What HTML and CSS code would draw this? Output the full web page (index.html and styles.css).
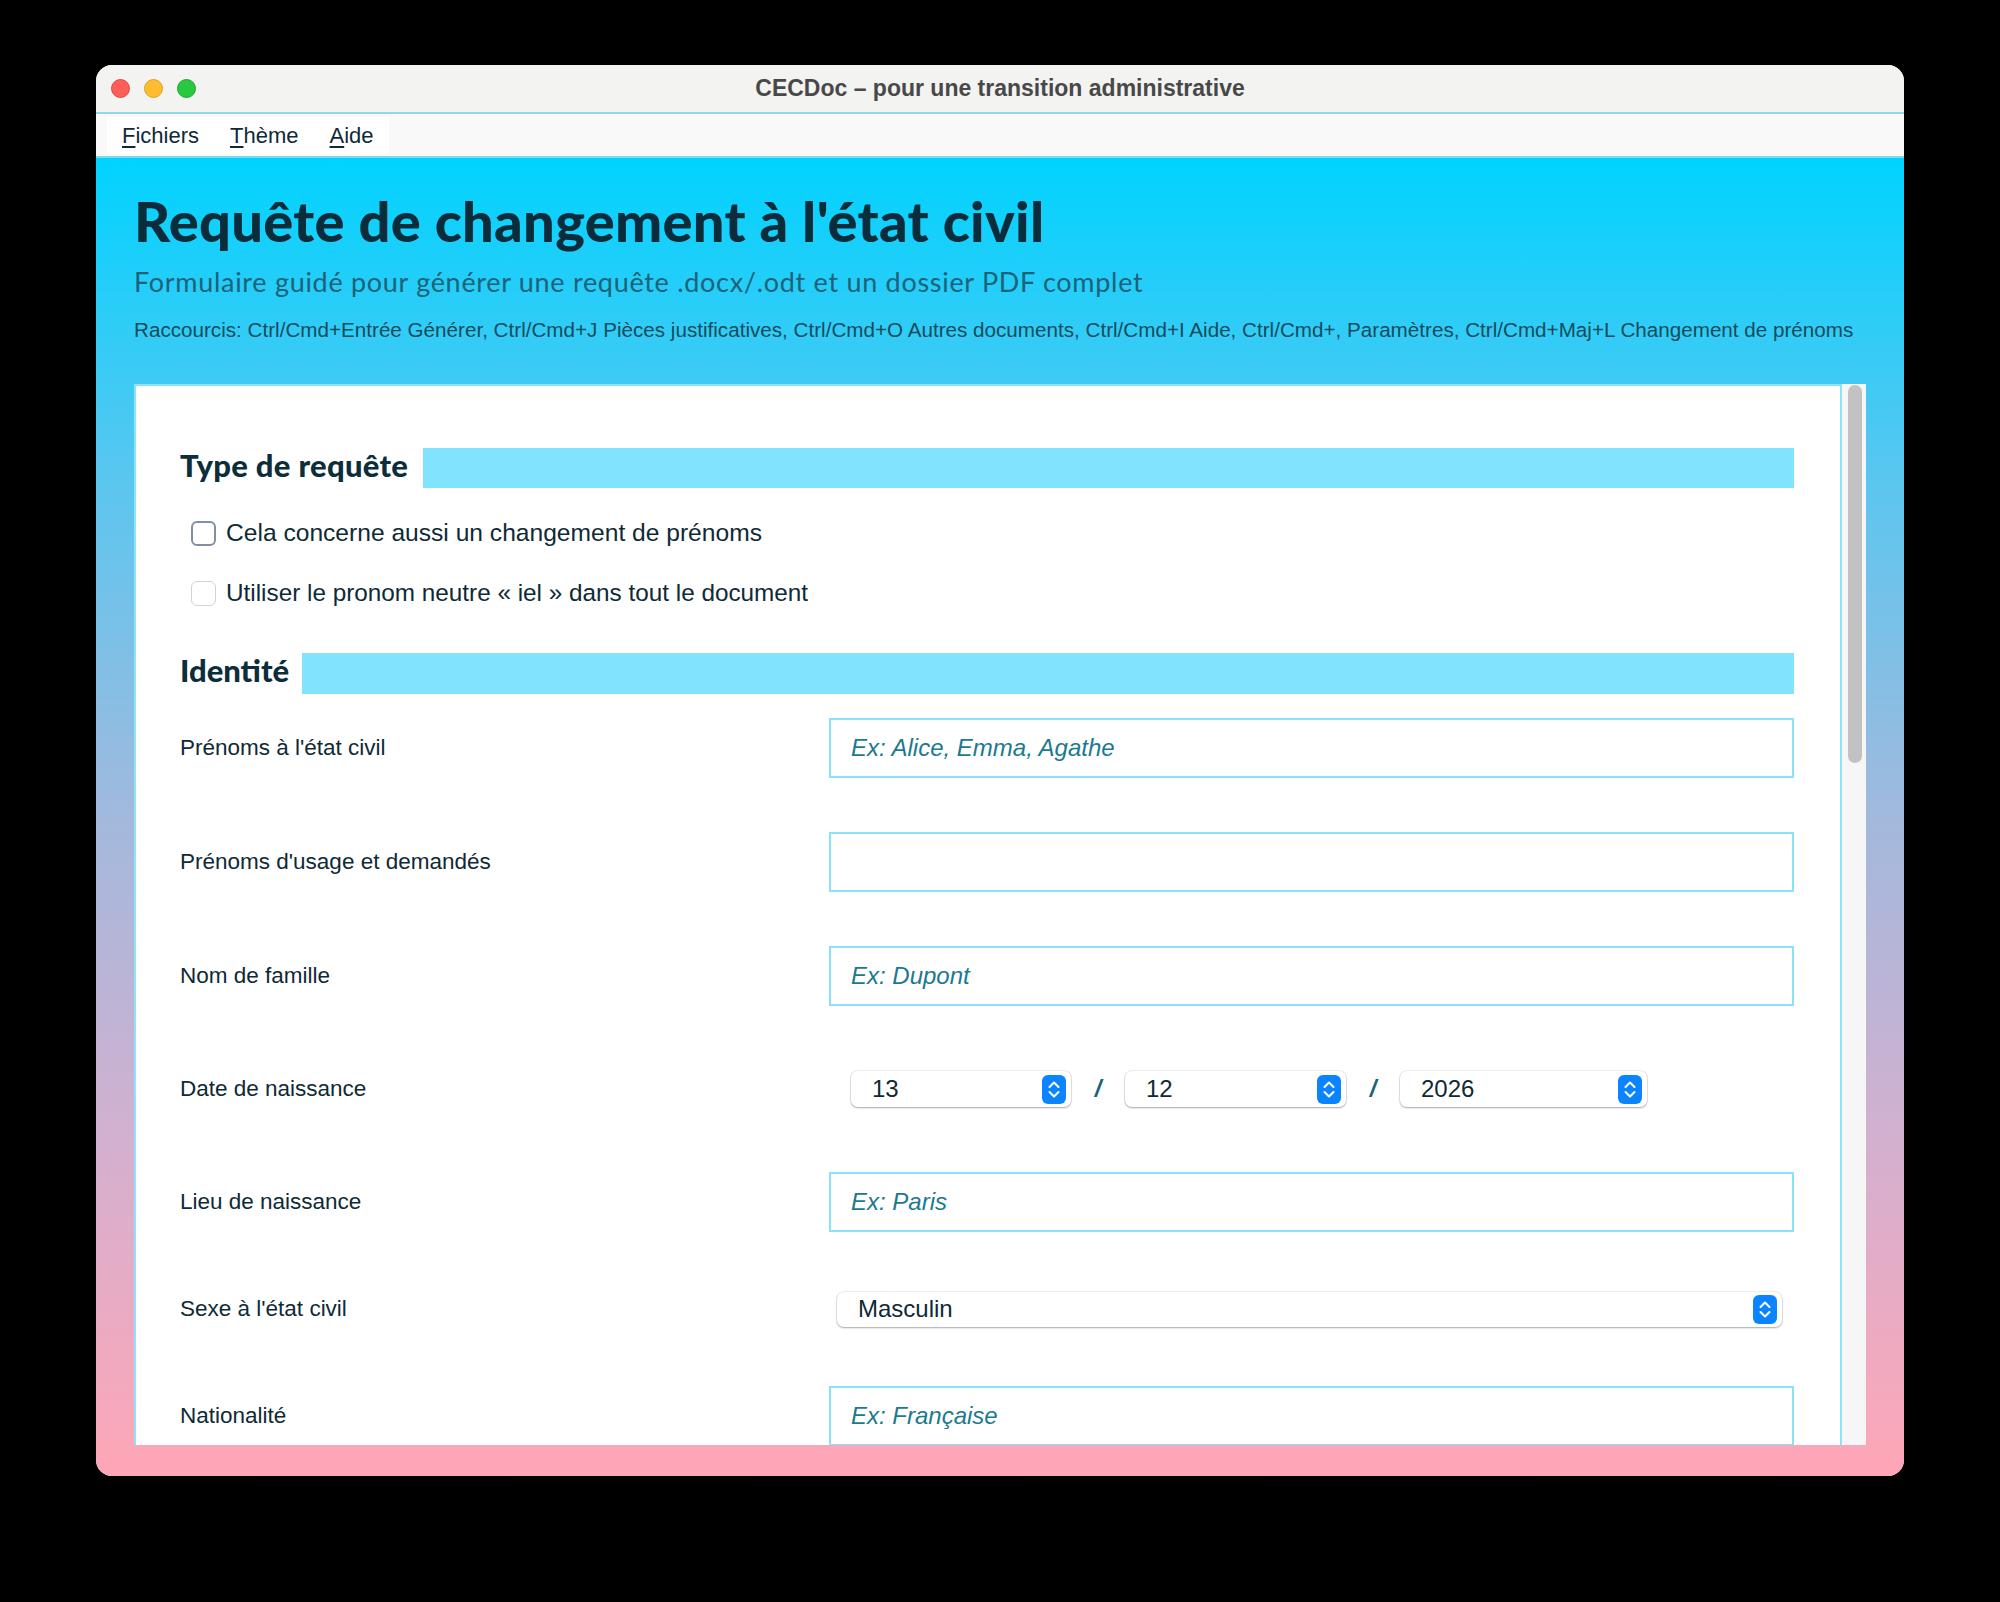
FILE: index.html
```html
<!DOCTYPE html>
<html lang="fr">
<head>
<meta charset="utf-8">
<title>CECDoc</title>
<link rel="stylesheet" href="styles.css">
</head>
<body>
<div class="window">
  <div class="titlebar">
    <div class="lights">
      <span class="light red"></span>
      <span class="light yellow"></span>
      <span class="light green"></span>
    </div>
    <div class="wintitle">CECDoc – pour une transition administrative</div>
    <div></div>
  </div>
  <div class="menubar">
    <div class="menu">
      <span class="menu-item"><u>F</u>ichiers</span>
      <span class="menu-item"><u>T</u>hème</span>
      <span class="menu-item"><u>A</u>ide</span>
    </div>
  </div>
  <div class="content">
    <h1 class="page-title">Requête de changement à l'état civil</h1>
    <p class="subtitle">Formulaire guidé pour générer une requête .docx/.odt et un dossier PDF complet</p>
    <p class="shortcuts">Raccourcis: Ctrl/Cmd+Entrée Générer, Ctrl/Cmd+J Pièces justificatives, Ctrl/Cmd+O Autres documents, Ctrl/Cmd+I Aide, Ctrl/Cmd+, Paramètres, Ctrl/Cmd+Maj+L Changement de prénoms</p>
    <div class="card-wrap">
      <div class="panel">
        <div class="section-head">
          <h2 class="section-title">Type de requête</h2>
          <div class="section-bar"></div>
        </div>
        <div class="checks">
          <label class="check"><span class="box focused"></span>Cela concerne aussi un changement de prénoms</label>
          <label class="check check-2"><span class="box"></span>Utiliser le pronom neutre « iel » dans tout le document</label>
        </div>
        <div class="section-head identity">
          <h2 class="section-title">Identité</h2>
          <div class="section-bar"></div>
        </div>
        <div class="form">
          <div class="label">Prénoms à l'état civil</div>
          <input class="field" type="text" placeholder="Ex: Alice, Emma, Agathe">

          <div class="label">Prénoms d'usage et demandés</div>
          <input class="field" type="text">

          <div class="label">Nom de famille</div>
          <input class="field" type="text" placeholder="Ex: Dupont">

          <div class="label">Date de naissance</div>
          <div class="date">
            <div class="spin w-day"><span>13</span>
              <svg class="stepper" viewBox="0 0 24 29" width="24" height="29"><rect width="24" height="29" rx="6" fill="#0a84ff"/><path d="M7.5 12 L12 7.5 L16.5 12 M7.5 17 L12 21.5 L16.5 17" fill="none" stroke="#fff" stroke-width="2" stroke-linecap="round" stroke-linejoin="round"/></svg>
            </div>
            <span class="slash">/</span>
            <div class="spin w-month"><span>12</span>
              <svg class="stepper" viewBox="0 0 24 29" width="24" height="29"><rect width="24" height="29" rx="6" fill="#0a84ff"/><path d="M7.5 12 L12 7.5 L16.5 12 M7.5 17 L12 21.5 L16.5 17" fill="none" stroke="#fff" stroke-width="2" stroke-linecap="round" stroke-linejoin="round"/></svg>
            </div>
            <span class="slash">/</span>
            <div class="spin w-year"><span>2026</span>
              <svg class="stepper" viewBox="0 0 24 29" width="24" height="29"><rect width="24" height="29" rx="6" fill="#0a84ff"/><path d="M7.5 12 L12 7.5 L16.5 12 M7.5 17 L12 21.5 L16.5 17" fill="none" stroke="#fff" stroke-width="2" stroke-linecap="round" stroke-linejoin="round"/></svg>
            </div>
          </div>

          <div class="label">Lieu de naissance</div>
          <input class="field" type="text" placeholder="Ex: Paris">

          <div class="label">Sexe à l'état civil</div>
          <div class="select-cell">
            <div class="spin select"><span>Masculin</span>
              <svg class="stepper" viewBox="0 0 24 29" width="24" height="29"><rect width="24" height="29" rx="6" fill="#0a84ff"/><path d="M7.5 12 L12 7.5 L16.5 12 M7.5 17 L12 21.5 L16.5 17" fill="none" stroke="#fff" stroke-width="2" stroke-linecap="round" stroke-linejoin="round"/></svg>
            </div>
          </div>

          <div class="label">Nationalité</div>
          <input class="field" type="text" placeholder="Ex: Française">
        </div>
      </div>
      <div class="scrollbar"><div class="thumb"></div></div>
    </div>
  </div>
</div>
</body>
</html>
```

FILE: styles.css
```css
html, body {
  margin: 0;
  padding: 0;
  background: #000;
}
body {
  font-family: "Liberation Sans", Arial, sans-serif;
  color: #0f2a36;
  height: 1602px;
  overflow: hidden;
}
.window {
  margin: 65px 0 0 96px;
  width: 1808px;
  height: 1411px;
  border-radius: 16px;
  overflow: hidden;
  display: flex;
  flex-direction: column;
  background: #f2f2f0;
}
.titlebar {
  height: 47px;
  flex: none;
  background: #f3f3f1;
  display: grid;
  grid-template-columns: 1fr auto 1fr;
  align-items: center;
}
.lights {
  display: flex;
  gap: 14px;
  padding-left: 15px;
}
.light {
  width: 19px;
  height: 19px;
  border-radius: 50%;
  box-sizing: border-box;
}
.red { background: #ff5f57; border: 1px solid #e2463f; }
.yellow { background: #febc2e; border: 1px solid #dfa023; }
.green { background: #28c840; border: 1px solid #1aab29; }
.wintitle {
  font-weight: 700;
  font-size: 23px;
  color: #484848;
}
.menubar {
  flex: none;
  height: 46px;
  box-sizing: border-box;
  border-top: 2px solid #8fd9ee;
  border-bottom: 2px solid #7ed8ef;
  background: #f9f9f9;
  padding: 3px 0 0 11px;
}
.menu {
  display: flex;
  align-items: center;
  width: 282px;
  height: 37px;
  box-sizing: border-box;
  background: #fff;
  padding-left: 15px;
  gap: 31px;
  font-size: 22px;
  color: #0f2a36;
}
.menu-item u {
  text-decoration-thickness: 2px;
  text-underline-offset: 3px;
}
.content {
  flex: 1;
  min-height: 0;
  display: flex;
  flex-direction: column;
  padding: 31px 38px 31px 38px;
  background: linear-gradient(180deg, #00d3ff 0%, #5cc6ef 25%, #a2b9dd 50%, #d4b0cf 75%, #ffa6b7 100%);
}
.page-title {
  margin: 0;
  font-family: Lato, "Liberation Sans", sans-serif;
  font-weight: 900;
  font-size: 56px;
  line-height: 64px;
  letter-spacing: 0.3px;
  color: #0b2c3a;
}
.subtitle {
  margin: 12px 0 0;
  font-family: Lato, "Liberation Sans", sans-serif;
  font-weight: 400;
  font-size: 27px;
  line-height: 34px;
  letter-spacing: 0.7px;
  color: #1d6278;
}
.shortcuts {
  margin: 17px 0 0;
  font-size: 20.65px;
  line-height: 28px;
  white-space: nowrap;
  color: #164c5d;
}
.card-wrap {
  flex: 1;
  min-height: 0;
  display: flex;
  margin-top: 40px;
}
.panel {
  flex: 1;
  min-width: 0;
  background: #fff;
  border: 2px solid #8fe3f8;
  border-bottom: none;
  overflow: hidden;
  padding: 62px 46px 0 44px;
}
.scrollbar {
  width: 24px;
  flex: none;
  background: #f6f6f6;
  padding: 1px 4px 0 6px;
  box-sizing: border-box;
}
.thumb {
  height: 378px;
  border-radius: 8px;
  background: #c2c2c2;
}
.section-head {
  display: flex;
  align-items: center;
  height: 40px;
}
.section-title {
  margin: 0;
  padding-bottom: 6px;
  font-family: Lato, "Liberation Sans", sans-serif;
  font-weight: 900;
  font-size: 31px;
  line-height: 36px;
  letter-spacing: 0.3px;
  color: #0c2e3b;
  white-space: nowrap;
}
.section-bar {
  flex: 1;
  height: 40px;
  margin-left: 15px;
  background: #82e3ff;
}
.identity {
  margin-top: 40px;
  height: 41px;
}
.identity .section-title { letter-spacing: 0; padding-bottom: 8px; }
.identity .section-bar { height: 41px; margin-left: 13px; }
.checks {
  margin-top: 25px;
  display: flex;
  flex-direction: column;
  gap: 20px;
}
.check {
  height: 40px;
  display: flex;
  align-items: center;
  gap: 10px;
  padding-left: 11px;
  font-size: 24.6px;
  color: #0f2a36;
}
.check-2 { font-size: 24.3px; }
.box {
  width: 25px;
  height: 25px;
  box-sizing: border-box;
  border-radius: 6px;
  border: 1.5px solid #d3d3d3;
  background: #fff;
}
.box.focused {
  border: 2.5px solid #7e90a2;
}
.form {
  margin-top: 24px;
  display: grid;
  grid-template-columns: 649px 1fr;
  grid-template-rows: 60px 60px 60px 58px 60px 46px 60px;
  row-gap: 54px;
}
.label {
  align-self: center;
  font-size: 22.5px;
  color: #0f2a36;
}
.field {
  height: 60px;
  width: 100%;
  box-sizing: border-box;
  border: 2px solid #88e2fa;
  border-radius: 0;
  background: #fff;
  padding: 0 0 0 20px;
  margin: 0;
  font-family: "Liberation Sans", Arial, sans-serif;
  font-size: 24px;
  font-style: italic;
  color: #1c7a8f;
  outline: none;
}
.field::placeholder {
  color: #1c7a8f;
  font-style: italic;
  opacity: 1;
}
.date {
  display: flex;
  align-items: center;
  padding-left: 22px;
}
.spin {
  height: 36px;
  box-sizing: border-box;
  display: flex;
  align-items: center;
  justify-content: space-between;
  padding: 0 5px 0 21px;
  border-radius: 7px;
  background: #fff;
  box-shadow: 0 0 0 1px rgba(0, 0, 0, 0.06), 0 1px 2px rgba(0, 0, 0, 0.3);
  font-size: 24px;
  color: #0f2a36;
}
.stepper { display: block; }
.w-day { width: 220px; }
.w-month { width: 221px; }
.w-year { width: 247px; }
.slash {
  width: 54px;
  text-align: center;
  font-size: 24px;
  font-style: italic;
  font-weight: 700;
  color: #1b6478;
}
.select-cell {
  display: flex;
  align-items: center;
  padding-left: 8px;
}
.select {
  width: 945px;
  height: 35px;
}
```
